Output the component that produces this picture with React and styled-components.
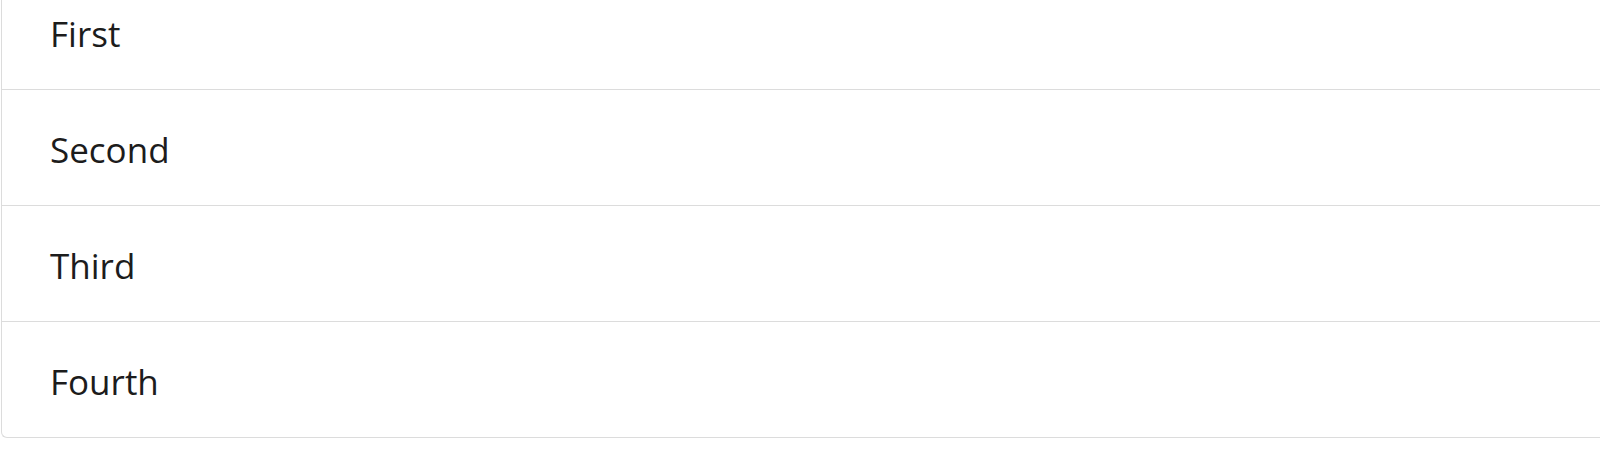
import React from "react";
import styled, { createGlobalStyle } from "styled-components";

const GlobalStyle = createGlobalStyle`
  html, body {
    margin: 0;
    padding: 0;
    background: #ffffff;
    overflow: hidden;
  }
  body {
    font-family: "Open Sans", "Noto Sans", "Liberation Sans", sans-serif;
    color: #212529;
  }
`;

const ListGroup = styled.ul`
  list-style: none;
  margin: -27px 0 0 1px;
  padding: 0;
  display: flex;
  flex-direction: column;
  border: 1px solid #dcdcdc;
  border-right: none;
  border-radius: 0 0 0 6px;
`;

const ListItem = styled.li`
  padding: 34px 48px 30px;
  font-size: 35px;
  line-height: 51px;
  color: #1c1c1c;
  border-top: ${(p) => (p.$first ? "none" : "1px solid #dcdcdc")};
`;

const items = ["First", "Second", "Third", "Fourth"];

export default function App() {
  return (
    <>
      <GlobalStyle />
      <ListGroup>
        {items.map((label, i) => (
          <ListItem key={label} $first={i === 0}>
            {label}
          </ListItem>
        ))}
      </ListGroup>
    </>
  );
}
